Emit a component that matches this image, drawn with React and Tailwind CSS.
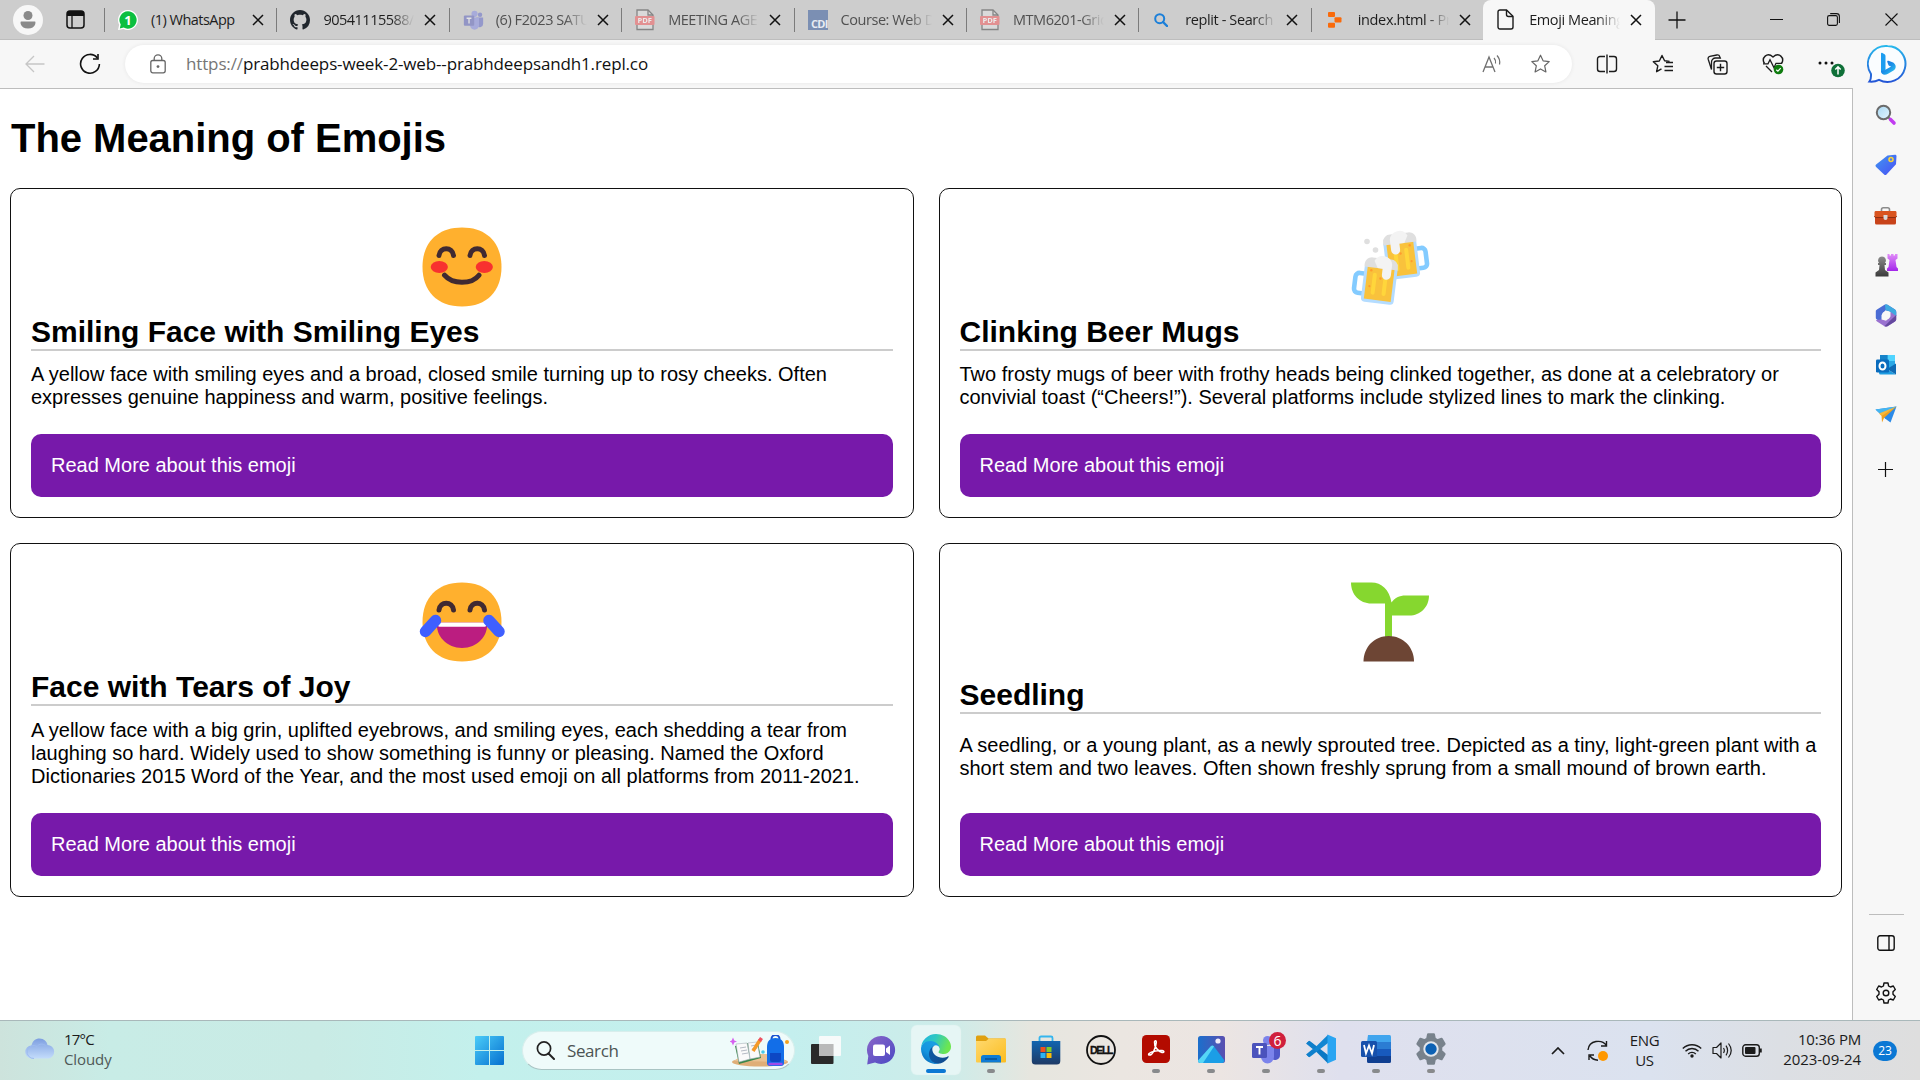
import React from "react";

const UI = "font-['Open_Sans','Noto_Sans',sans-serif]";

function Svg({ w, h, vb, className = "", children }) {
  return (
    <svg width={w} height={h} viewBox={vb || `0 0 ${w} ${h}`} fill="none" className={`block shrink-0 ${className}`}>
      {children}
    </svg>
  );
}

/* ---------- tab icons ---------- */

const PdfIcon = () => (
  <Svg w={20} h={22} className="opacity-60">
    <path d="M2 1h11l5 5v14.5H2z" fill="#e4e4e4" stroke="#555" strokeWidth="1.3" />
    <path d="M13 1v5h5" stroke="#555" strokeWidth="1.3" />
    <rect x="0" y="7" width="19.5" height="9" rx="1" fill="#f0686a" />
    <text x="9.7" y="14.3" fontSize="7.5" fontWeight="700" textAnchor="middle" fill="#fff" fontFamily="Open Sans">PDF</text>
  </Svg>
);

const WhatsAppIcon = () => (
  <Svg w={20} h={20}>
    <path d="M10 0a10 10 0 1 1-4.6 18.9L0 20l1.2-5.2A10 10 0 0 1 10 0z" fill="#fff" />
    <path d="M10 1.3a8.7 8.7 0 1 1-4.3 16.3L1.8 18.4l.9-3.9A8.7 8.7 0 0 1 10 1.3z" fill="#0bbf3f" />
    <text x="10" y="14.8" fontSize="13" fontWeight="700" textAnchor="middle" fill="#fff" fontFamily="Open Sans">1</text>
  </Svg>
);

const GithubIcon = () => (
  <Svg w={20} h={20} vb="0 0 16 16">
    <path fill="#20262d" d="M8 0C3.58 0 0 3.58 0 8c0 3.54 2.29 6.53 5.47 7.59.4.07.55-.17.55-.38 0-.19-.01-.82-.01-1.49-2.01.37-2.53-.49-2.69-.94-.09-.23-.48-.94-.82-1.13-.28-.15-.68-.52-.01-.53.63-.01 1.08.58 1.23.82.72 1.21 1.87.87 2.33.66.07-.52.28-.87.51-1.07-1.78-.2-3.64-.89-3.64-3.95 0-.87.31-1.59.82-2.15-.08-.2-.36-1.02.08-2.12 0 0 .67-.21 2.2.82.64-.18 1.32-.27 2-.27s1.36.09 2 .27c1.53-1.04 2.2-.82 2.2-.82.44 1.1.16 1.92.08 2.12.51.56.82 1.27.82 2.15 0 3.07-1.87 3.75-3.65 3.95.29.25.54.73.54 1.48 0 1.07-.01 1.93-.01 2.2 0 .21.15.46.55.38A8.01 8.01 0 0 0 16 8c0-4.42-3.58-8-8-8z" />
  </Svg>
);

const TeamsShape = () => (
  <g>
    <circle cx="24.5" cy="7" r="3.2" fill="#5059c9" />
    <path d="M19 11h10v9a5 5 0 0 1-9 3z" fill="#5059c9" />
    <circle cx="16.5" cy="5.5" r="4.5" fill="#7b83eb" />
    <path d="M10 11h13v11a6.5 6.5 0 0 1-13 0z" fill="#7b83eb" />
    <rect x="1" y="8" width="15" height="15" rx="1.5" fill="#4b53bc" />
    <path d="M5 12h7M8.5 12v7.5" stroke="#fff" strokeWidth="1.9" />
  </g>
);

const TeamsTab = () => (
  <Svg w={21} h={20} vb="0 0 30 29" className="opacity-45"><TeamsShape /></Svg>
);

const CdiIcon = () => (
  <div className="h-5 w-5 overflow-hidden">
    <Svg w={20} h={20}>
      <rect width="20" height="20" fill="#7b8fb3" />
      <text x="3" y="18" fontSize="11" fontWeight="700" fill="#e8ecf2" fontFamily="Open Sans" letterSpacing="-.7">CDI</text>
    </Svg>
  </div>
);

const BlueSearch = () => (
  <Svg w={14} h={14} className="ml-[2px]">
    <circle cx="5.7" cy="5.7" r="4.5" stroke="#1b7fd9" strokeWidth="2" />
    <path d="m9 9 4 4" stroke="#1b7fd9" strokeWidth="2.4" strokeLinecap="round" />
  </Svg>
);

const ReplitIcon = () => (
  <Svg w={14} h={16} className="ml-[3px]">
    <rect x="0" y="0" width="7" height="5" rx="1" fill="#f96a0b" />
    <rect x="6.5" y="5.3" width="7" height="5.2" rx="1" fill="#f96a0b" />
    <rect x="0" y="10.8" width="7" height="5" rx="1" fill="#f96a0b" />
  </Svg>
);

const PageIcon = () => (
  <Svg w={17} h={21}>
    <path d="M3 1h6.5L16 7.3V18a2 2 0 0 1-2 2H3a2 2 0 0 1-2-2V3a2 2 0 0 1 2-2z" stroke="#1b1b1b" strokeWidth="1.4" />
    <path d="M9.5 1v4.5a2 2 0 0 0 2 2H16" stroke="#1b1b1b" strokeWidth="1.4" />
  </Svg>
);

const Cross = () => (
  <Svg w={12} h={12}>
    <path d="m1 1 10 10M11 1 1 11" stroke="#111" strokeWidth="1.5" />
  </Svg>
);

const fade = "[mask-image:linear-gradient(to_right,#000_75%,transparent)]";

const tabs = [
  { icon: <WhatsAppIcon />, title: "(1) WhatsApp", tone: "text-[#1d1d1d] tracking-[-0.52px]" },
  { icon: <GithubIcon />, title: "90541115588/", tone: `text-[#1d1d1d] tracking-[-0.5px] ${fade}` },
  { icon: <TeamsTab />, title: "(6) F2023 SATU", tone: `text-[#505050] tracking-[-0.45px] ${fade}` },
  { icon: <PdfIcon />, title: "MEETING AGEN", tone: `text-[#505050] tracking-[-0.45px] ${fade}` },
  { icon: <CdiIcon />, title: "Course: Web D", tone: `text-[#505050] tracking-[-0.45px] ${fade}` },
  { icon: <PdfIcon />, title: "MTM6201-Grid", tone: `text-[#505050] tracking-[-0.45px] ${fade}` },
  { icon: <BlueSearch />, title: "replit - Search", tone: `text-[#1d1d1d] tracking-[-0.4px] ${fade}` },
  { icon: <ReplitIcon />, title: "index.html - Pr", tone: `text-[#1d1d1d] tracking-[-0.35px] ${fade}` },
];

function Tab({ icon, title, tone, active }) {
  return (
    <div
      className={
        active
          ? "flex h-10 w-[172px] items-center rounded-t-lg bg-[#f7f7f7] pl-[14px]"
          : "flex h-10 w-[172.4px] items-center"
      }
    >
      {!active && <div className="mr-[13px] h-6 w-px bg-[#7b7b7b]" />}
      <div className={`flex items-center ${active ? "w-8" : "w-[33px]"}`}>{icon}</div>
      <div className={`w-[91px] overflow-hidden whitespace-nowrap text-[14.5px] leading-5 ${tone}`}>{title}</div>
      <div className="ml-[10px]"><Cross /></div>
    </div>
  );
}

function TabStrip() {
  return (
    <div className="flex h-10 items-center border-b border-[#bdbdbd] bg-[#cdcdcd]">
      <div className="ml-[13px] flex size-[30px] items-center justify-center rounded-full bg-[#f7f7f7]">
        <Svg w={16} h={18}>
          <circle cx="8" cy="4.5" r="4.5" fill="#8a8a8a" />
          <path d="M1 10.5h14c1 0 1 7-7 7s-8-7-7-7z" fill="#8a8a8a" />
        </Svg>
      </div>
      <Svg w={19} h={19} className="ml-[22.5px]">
        <rect x="1" y="1" width="17" height="17" rx="3" stroke="#111" strokeWidth="1.5" />
        <path d="M1 6V4a3 3 0 0 1 3-3h11a3 3 0 0 1 3 3v2z" fill="#111" />
        <path d="M6 6v12" stroke="#111" strokeWidth="1.3" />
      </Svg>
      <div className="ml-[19.5px] flex h-10">
        {tabs.map((t, i) => <Tab key={i} {...t} />)}
        <Tab active icon={<PageIcon />} title="Emoji Meaning" tone={`text-[#1d1d1d] tracking-[-0.4px] ${fade}`} />
      </div>
      <Svg w={18} h={18} className="ml-[13px]">
        <path d="M9 0.5v17M.5 9h17" stroke="#111" strokeWidth="1.3" />
      </Svg>
      <div className="ml-auto flex items-center">
        <div className="flex w-14 justify-center"><div className="mr-[2px] h-px w-[13px] bg-[#111]" /></div>
        <div className="flex w-[57px] justify-center">
          <Svg w={13} h={13}>
            <rect x=".6" y="2.6" width="9.8" height="9.8" rx="1.6" stroke="#111" strokeWidth="1.1" />
            <path d="M3.2 .6H9.5A2.9 2.9 0 0 1 12.4 3.5V10" stroke="#111" strokeWidth="1.1" />
          </Svg>
        </div>
        <div className="flex w-[58px] justify-center">
          <Svg w={13} h={13}><path d="m.5.5 12 12M12.5.5l-12 12" stroke="#111" strokeWidth="1.1" /></Svg>
        </div>
      </div>
    </div>
  );
}

/* ---------- address bar ---------- */

const star = "M10 1.2l2.6 5.6 6.1.8-4.5 4.2 1.2 6.1L10 14.9l-5.4 3 1.2-6.1L1.3 7.6l6.1-.8z";

function Toolbar() {
  return (
    <div className="flex h-12 items-center bg-[#f7f7f7]">
      <Svg w={20} h={18} className="ml-[25px]">
        <path d="M19.5 9H1M9 1 1 9l8 8" stroke="#c6c6c6" strokeWidth="1.3" />
      </Svg>
      <Svg w={22} h={22} className="ml-[34px]">
        <path d="M18.3 4.9A9.4 9.4 0 1 0 20.4 11" stroke="#111" strokeWidth="1.6" />
        <path d="M19 1v5h-5" stroke="#111" strokeWidth="1.6" />
      </Svg>
      <div className="ml-6 flex h-[38px] w-[1447px] items-center rounded-full bg-white pl-[25px] shadow-[0_0_4px_rgba(0,0,0,0.07)]">
        <Svg w={16} h={20}>
          <rect x=".8" y="6.5" width="14.4" height="12.3" rx="2" stroke="#666" strokeWidth="1.3" />
          <path d="M4.2 6.5V4.6a3.8 3.8 0 0 1 7.6 0v1.9" stroke="#666" strokeWidth="1.3" />
          <circle cx="8" cy="12.6" r="1.4" fill="#666" />
        </Svg>
        <div className="ml-5 w-[464px] whitespace-nowrap text-[17px] leading-6 tracking-[-0.14px] text-[#111]">
          <span className="text-[#767676]">https://</span>prabhdeeps-week-2-web--prabhdeepsandh1.repl.co
        </div>
        <Svg w={20} h={20} className="ml-[832px]">
          <path d="m1 18 6-15 6 15M3 13h8" stroke="#707070" strokeWidth="1.3" />
          <path d="M12 4a6 6 0 0 1 1.500 5.500M15 1.500a10 10 0 0 1 2.500 9" stroke="#707070" strokeWidth="1.2" />
        </Svg>
        <Svg w={21} h={20} vb="0 0 20 20" className="ml-7"><path d={star} stroke="#666" strokeWidth="1.2" strokeLinejoin="round" /></Svg>
      </div>
      <Svg w={22} h={20} className="ml-6">
        <path d="M9 2.500H4a2.500 2.500 0 0 0-2.500 2.500v10A2.500 2.500 0 0 0 4 17.500h5M13 2.500h5a2.500 2.500 0 0 1 2.500 2.500v10a2.500 2.500 0 0 1-2.500 2.500h-5M11 .5v19" stroke="#1b1b1b" strokeWidth="1.4" />
      </Svg>
      <Svg w={22} h={20} className="ml-[34px]">
        <path d="M9.500 14.800 4.600 17.700l1.200-5.900L1.300 7.800l6-.8L10 1.500l2.600 5.300 5 .6" stroke="#1b1b1b" strokeWidth="1.400" strokeLinejoin="round" />
        <path d="M14 8.500h7M12.500 12.500H21M12.500 16.500H21" stroke="#1b1b1b" strokeWidth="1.500" />
      </Svg>
      <Svg w={21} h={21} className="ml-[33px]">
        <rect x="7" y="7" width="13" height="13" rx="2.500" stroke="#1b1b1b" strokeWidth="1.400" />
        <path d="M13.500 9.800v7.400M9.800 13.500h7.400" stroke="#1b1b1b" strokeWidth="1.400" />
        <path d="M4.500 15.500 1.200 5.200A2.400 2.400 0 0 1 2.800 2.300L9.800 1a2.600 2.600 0 0 1 3 1.800L13.300 4H8.500A4 4 0 0 0 4.500 8z" stroke="#1b1b1b" strokeWidth="1.300" />
      </Svg>
      <Svg w={22} h={22} className="ml-[34px]">
        <path d="M2.500 10.500C-1 5 5-1.500 11 4c6-5.500 12 1 8.500 6.500M4 13l6 6" stroke="#1b1b1b" strokeWidth="1.400" />
        <path d="M1 10.800h5l2-4 4 8 2-4.500h6" stroke="#1b1b1b" strokeWidth="1.300" />
        <circle cx="16.500" cy="16.500" r="4.800" fill="#107c10" />
        <path d="m14.300 16.700 1.600 1.500 2.800-3" stroke="#fff" strokeWidth="1.200" />
      </Svg>
      <Svg w={28} h={24} className="mt-[6px] ml-[34px]">
        <circle cx="2" cy="8" r="1.500" fill="#111" /><circle cx="8" cy="8" r="1.500" fill="#111" /><circle cx="14" cy="8" r="1.500" fill="#111" />
        <circle cx="20" cy="15.500" r="6.800" fill="#0f7038" />
        <path d="M20 19.500v-7.500M17.300 14.500l2.700-2.700 2.700 2.700" stroke="#fff" strokeWidth="1.500" />
      </Svg>
      <Svg w={40} h={40} className="ml-[21px]">
        <defs>
          <linearGradient id="bingRing" x1="0" y1="0" x2="0" y2="1"><stop stopColor="#27b8ec" /><stop offset="1" stopColor="#2455d6" /></linearGradient>
          <linearGradient id="bingB" x1="0" y1="0" x2="1" y2="1"><stop stopColor="#1665dd" /><stop offset=".5" stopColor="#1b8fe8" /><stop offset="1" stopColor="#35d2ee" /></linearGradient>
        </defs>
        <path d="M20.500 2a18 18 0 1 1-8.500 33.900c-3 1.500-6.500 2-9.600 1.700 1.500-2 1.800-4.600 1.600-7.600A18 18 0 0 1 20.500 2z" fill="#fafdff" stroke="url(#bingRing)" strokeWidth="2" />
        <path d="M14 9.500c0-.8.800-1 1.400-.6l2.200 1.400c.6.400.9.900.9 1.600V26L14 28.500z" fill="#1c9df0" />
        <path d="M14 27c0 4 4 4.500 7 2.700l5.500-3.300c4-2.500 2-7-1-8.200l-4-1.500c-1-.3-1.500.5-1.200 1.400l1 2.600c.2.600.6 1 1.200 1.200l1.700.7L18 26z" fill="url(#bingB)" />
      </Svg>
    </div>
  );
}

/* ---------- page emojis ---------- */

const face = "M40 0.500C65 .5 79.500 16 79.500 40S65 79.500 40 79.500.5 64 .5 40 15 .5 40 .5z";

const Smile = () => (
  <Svg w={80} h={80}>
    <path d={face} fill="#ffb02e" />
    <ellipse cx="17.300" cy="40" rx="8.600" ry="6" fill="#f8312f" />
    <ellipse cx="62.300" cy="40" rx="8.600" ry="6" fill="#f8312f" />
    <path d="M17 28.500c1-9 13.500-9 14.500 0M48 28.500c1-9 13.500-9 14.500 0M22.500 48.200c8 9.500 27 9.500 34.500 0" stroke="#402a32" strokeWidth="5" strokeLinecap="round" />
  </Svg>
);

const Joy = () => (
  <Svg w={86} h={80}>
    <path d={face} transform="translate(3 0)" fill="#ffb02e" />
    <path d="M20 28c1-9 13.500-9 14.500 0M51 28c1-9 13.500-9 14.500 0" stroke="#402a32" strokeWidth="5" strokeLinecap="round" />
    <path d="M18 40.500h50C69.500 54 58 66 43 66S16.500 54 18 40.500z" fill="#bb1d80" />
    <path d="M18 40.500h50l-.8 3a1.600 1.600 0 0 1-1.500 1.200H20.500a1.600 1.600 0 0 1-1.500-1.200z" fill="#fff" />
    <path d="M16.500 38.500 6.500 49.500M70 38.500l10 11" stroke="#3f5fff" strokeWidth="11.500" strokeLinecap="round" />
  </Svg>
);

const Mug = () => (
  <g>
    <path d="M2 9h-6a4 4 0 0 0-4 4v12a4 4 0 0 0 4 4h6" stroke="#83cbff" strokeWidth="4.600" />
    <path d="M0 0h33v33a4 4 0 0 1-4 4H4a4 4 0 0 1-4-4z" fill="#b4dcff" />
    <path d="M3 0h27v34H3z" fill="#f9c23c" />
    <path d="M11 9v18M22 9v18" stroke="#ffd63b" strokeWidth="4" strokeLinecap="round" />
    <circle cx="7" cy="5" r="1.300" fill="#ff9b2e" /><circle cx="7" cy="21" r="1.100" fill="#ff9b2e" /><circle cx="17" cy="12" r="1.200" fill="#ff9b2e" />
  </g>
);

const Beers = () => (
  <Svg w={80} h={80}>
    <g transform="translate(66 12.500) rotate(-7) scale(-1 1)">
      <Mug />
      <path d="M0 2a7.500 7.500 0 0 1 7-10h18a7 7 0 0 1 8 7v3z" fill="#dfdfdf" />
      <path d="M8-5a9.500 9.500 0 0 1 18 2v11a4.500 4.500 0 0 1-9 0V2H12z" fill="#f3f3f3" />
    </g>
    <g transform="translate(15 37.500) rotate(7)">
      <Mug />
      <path d="M0 2a7.500 7.500 0 0 1 7-10h18a7 7 0 0 1 8 7v3z" fill="#dfdfdf" />
      <path d="M8-5a9.500 9.500 0 0 1 18 2v11a4.500 4.500 0 0 1-9 0V2H12z" fill="#f3f3f3" transform="translate(1 0)" />
    </g>
    <circle cx="17" cy="14.500" r="2.800" fill="#dfdfdf" /><circle cx="25.500" cy="23" r="2.800" fill="#dfdfdf" />
  </Svg>
);

const Seedling = () => (
  <Svg w={80} h={80}>
    <path d="M1 .5h20.500c10 0 18 7 20 20 3-4.500 8-7 14-7h23.500c0 12-9 20-19.500 20H42V57h-7V21.500H21.500C9.500 21.500 1 12.500 1 .5z" fill="#86d72f" />
    <path d="M13.500 79.500C13.500 65 24.500 54 38.700 54S64 65 64 79.500z" fill="#6d4534" />
  </Svg>
);

function Card({ emoji, title, text, titleGap, textGap }) {
  return (
    <article className="flex flex-col rounded-[10px] border border-[#111] px-5 pb-5 pt-[37.500px]">
      <div className="flex justify-center">{emoji}</div>
      <h2 className={`border-b-2 border-[#ccc] text-[30px] font-bold leading-[35px] ${titleGap}`}>{title}</h2>
      <p className={`text-[20px] leading-[23px] ${textGap}`}>
        {text.map((line) => <span key={line} className="block whitespace-nowrap">{line}</span>)}
      </p>
      <a className="mt-auto block h-[63px] rounded-[10px] bg-[#7719aa] px-5 pt-5 text-[20px] leading-[23px] text-white">
        Read More about this emoji
      </a>
    </article>
  );
}

function Page() {
  return (
    <main className="h-[931px] w-[1852px] bg-white px-[10px] font-['Liberation_Sans',Arial,sans-serif] text-black">
      <h1 className="pl-px pt-[26px] text-[40px] font-bold leading-[46px] tracking-[-0.03px]">The Meaning of Emojis</h1>
      <div className="mt-[27px] grid grid-cols-2 grid-rows-[330px_354px] gap-[25px]">
        <Card
          emoji={<Smile />} title="Smiling Face with Smiling Eyes" titleGap="mt-[7.500px]" textGap="mt-3"
          text={["A yellow face with smiling eyes and a broad, closed smile turning up to rosy cheeks. Often", "expresses genuine happiness and warm, positive feelings."]}
        />
        <Card
          emoji={<Beers />} title="Clinking Beer Mugs" titleGap="mt-[7.500px]" textGap="mt-3"
          text={["Two frosty mugs of beer with frothy heads being clinked together, as done at a celebratory or", "convivial toast (“Cheers!”). Several platforms include stylized lines to mark the clinking."]}
        />
        <Card
          emoji={<Joy />} title="Face with Tears of Joy" titleGap="mt-[7.500px]" textGap="mt-[13px]"
          text={["A yellow face with a big grin, uplifted eyebrows, and smiling eyes, each shedding a tear from", "laughing so hard. Widely used to show something is funny or pleasing. Named the Oxford", "Dictionaries 2015 Word of the Year, and the most used emoji on all platforms from 2011-2021."]}
        />
        <Card
          emoji={<Seedling />} title="Seedling" titleGap="mt-[15.500px]" textGap="mt-5"
          text={["A seedling, or a young plant, as a newly sprouted tree. Depicted as a tiny, light-green plant with a", "short stem and two leaves. Often shown freshly sprung from a small mound of brown earth."]}
        />
      </div>
    </main>
  );
}

/* ---------- sidebar ---------- */

const gearPath = "M9 1h4l.6 3 1.800 1 2.900-1 2 3.500L18 9.800v2.400l2.300 2.300-2 3.500-2.900-1-1.800 1-.6 3H9l-.6-3-1.800-1-2.900 1-2-3.500L4 12.200V9.800L1.700 7.500l2-3.500 2.900 1 1.800-1z";
const Gear = () => (
  <g stroke="#111" strokeWidth="1.400" strokeLinejoin="round"><path d={gearPath} /><circle cx="11" cy="11" r="2.800" /></g>
);

function Sidebar() {
  const cell = "flex h-[50px] items-center justify-center";
  return (
    <aside className="flex h-[932px] w-[68px] flex-col border-l border-[#bdbdbd] bg-[#f7f7f7] pr-[2px] pt-[2px]">
      <div className="flex h-[50px] items-center justify-center">
        <Svg w={22} h={22}>
          <defs><linearGradient id="lens" x1="0" y1="0" x2="1" y2="1"><stop stopColor="#a8d8f4" /><stop offset="1" stopColor="#e4f5fd" /></linearGradient></defs>
          <path d="m12.500 12.500 3 3" stroke="#777" strokeWidth="2" />
          <circle cx="8.500" cy="8.500" r="6.700" fill="url(#lens)" stroke="#6b6b6b" strokeWidth="2" />
          <path d="m15.500 15.500 3.500 3.500" stroke="#c13cf0" strokeWidth="3.600" strokeLinecap="round" />
        </Svg>
      </div>
      <div className={cell}>
        <Svg w={22} h={22}>
          <defs><linearGradient id="tag" x1="0" y1="0" x2="1" y2="1"><stop stopColor="#3f97f0" /><stop offset="1" stopColor="#4a4ef5" /></linearGradient></defs>
          <path d="M12.500 1.500 20 .8c1 0 1.500.5 1.500 1.500l-.5 8L11.500 20.500c-.8.8-1.600.8-2.400 0l-8-7.500c-.8-.8-.8-1.600 0-2.400z" fill="url(#tag)" />
          <circle cx="16" cy="5.500" r="2" fill="#4f7be8" stroke="#f8d338" strokeWidth="1.600" />
        </Svg>
      </div>
      <div className={cell}>
        <Svg w={23} h={19}>
          <path d="M7.500 6V3.500A1.800 1.800 0 0 1 9.300 1.700h4.400a1.800 1.800 0 0 1 1.800 1.800V6" stroke="#8b8b8b" strokeWidth="1.600" />
          <rect x="1" y="9" width="21" height="9.500" rx="1.500" fill="#c8431a" />
          <path d="M2 5h19c1 0 1.500.5 1.500 1.500V10c0 1-.5 1.500-1.500 1.500H2C1 11.500.5 11 .5 10V6.500C.5 5.500 1 5 2 5z" fill="#d9541f" />
          <path d="M.5 10c0 1 .5 1.500 1.500 1.500h19c1 0 1.500-.5 1.500-1.500" stroke="#8e2f12" />
          <path d="M9.500 9h4v3a2 2 0 0 1-4 0z" fill="#d8d8d8" />
        </Svg>
      </div>
      <div className={cell}>
        <Svg w={24} h={24}>
          <defs><linearGradient id="rook" x1="0" y1="0" x2="0" y2="1"><stop stopColor="#e08bf8" /><stop offset="1" stopColor="#a326ea" /></linearGradient><linearGradient id="pawn" x1="0" y1="0" x2="0" y2="1"><stop stopColor="#8b8b8b" /><stop offset="1" stopColor="#3b3b3b" /></linearGradient></defs>
          <path d="M13.500 1h2v1.500h1.500V1h2.500v1.500H21V1h2.500v4.500L21.500 7l1 7 1.500 1.500V18H13v-2.500L14.500 14l1-7-2-1.500z" fill="url(#rook)" />
          <path d="M8 3.500a4 4 0 0 1 3 6.600h1v2h-1.500l.5 5 3.500 2.500V23.500h-13V19.600L5 17.100l.5-5H4v-2h1A4 4 0 0 1 8 3.500z" fill="url(#pawn)" />
        </Svg>
      </div>
      <div className={cell}>
        <Svg w={22} h={23}>
          <path d="M9.500.8c1-.5 2-.5 3 0L20 5.500c.8.500 1.200 1.200 1.200 2V12l-6-4.500-4.700-1.300L6.500 11v7L1.800 15.500C1.200 15 .8 14.500.8 13.500v-6c0-1 .4-1.500 1.200-2z" fill="#4a6cd4" />
          <path d="M21.200 8v7.500c0 .8-.4 1.400-1.200 1.900l-7.500 4.800c-1 .5-2 .5-3 0L2 17.400c-.5-.3-.9-.8-1-1.400l5.500-.5 4.500 1.300 4.500-4.300v-5z" fill="#9a72d0" />
          <path d="M10 .7c1-.4 1.700-.4 2.500.1L20 5.500c.8.500 1.200 1.200 1.200 2V12L15 7.500 10.500 6z" fill="#3eaae0" />
          <path d="M21.200 11v4.500c0 .8-.4 1.400-1.200 1.900l-7.500 4.800c-1 .5-2 .5-3 0l5.500-5.500z" fill="#65499f" />
          <circle cx="11" cy="11.500" r="4" fill="#f7f7f7" />
        </Svg>
      </div>
      <div className={cell}>
        <Svg w={22} h={22}>
          <rect x="5" y="1" width="15" height="13" fill="#2aa8e6" /><rect x="12.500" y="1" width="7.500" height="6" fill="#50d4ff" /><rect x="5" y="1" width="7.500" height="5" fill="#1583c9" />
          <path d="M4 10l17 10.500H5.500A1.500 1.500 0 0 1 4 19z" fill="#1e9de2" /><path d="M21 9.500v11l-9-5.500z" fill="#0f6ab4" />
          <rect x="1" y="5.500" width="13" height="13" rx="1.300" fill="#0a6cbd" />
          <ellipse cx="7.500" cy="12" rx="3" ry="3.500" stroke="#fff" strokeWidth="2" />
        </Svg>
      </div>
      <div className={cell}>
        <Svg w={22} h={18}>
          <path d="M.5 3.500 21.500.5 15.500 16.500 10 12.500z" fill="#2b8ae8" />
          <path d="M.5 3.500 21.500.5 6.500 9z" fill="#45b5f0" />
          <path d="M6.500 9 21.500.5 9 12l-2 4.500z" fill="#f0a01e" />
          <path d="m4 7.500 17.500-7L6.500 10z" fill="#f8b83a" />
        </Svg>
      </div>
      <div className="flex h-[58px] items-center justify-center">
        <Svg w={15} h={15}><path d="M7.500 0v15M0 7.500h15" stroke="#111" strokeWidth="1.200" /></Svg>
      </div>
      <div className="ml-4 mr-[14px] mt-auto h-px bg-[#bdbdbd]" />
      <div className="flex h-14 items-center justify-center">
        <Svg w={18} h={16}>
          <rect x=".8" y=".8" width="16.400" height="14.400" rx="2.200" stroke="#111" strokeWidth="1.400" /><path d="M12 1v14" stroke="#111" strokeWidth="1.400" />
        </Svg>
      </div>
      <div className="mb-[6px] flex h-[43px] items-center justify-center">
        <Svg w={22} h={22}><Gear /></Svg>
      </div>
    </aside>
  );
}

/* ---------- taskbar ---------- */

const apps = [
  {
    name: "taskview",
    icon: (
      <Svg w={30} h={30}>
        <rect x="0" y="9" width="22.500" height="20" rx="1" fill="#2a2a2a" />
        <rect x="8" y="1" width="22" height="20" rx="1" fill="#fbfbfb" opacity=".92" />
        <rect x="8" y="9" width="14.500" height="12" fill="#b9b9b9" />
      </Svg>
    ),
  },
  {
    name: "chat",
    icon: (
      <Svg w={30} h={30}>
        <defs><linearGradient id="chat" x1="0" y1="0" x2="1" y2="1"><stop stopColor="#8a66c8" /><stop offset="1" stopColor="#4b49c4" /></linearGradient></defs>
        <path d="M15 1a14 14 0 1 1-6 26.600L1.200 29.500 2.300 21A14 14 0 0 1 15 1z" fill="url(#chat)" />
        <rect x="7" y="9.500" width="12" height="11.500" rx="2" fill="#fff" /><path d="m20 13.500 4-3v9.500l-4-3z" fill="#fff" />
      </Svg>
    ),
  },
  {
    name: "edge", active: true,
    icon: (
      <Svg w={30} h={30} vb="0 0 256 256">
        <defs>
          <linearGradient id="e1" x1="0" y1=".7" x2="1" y2=".7"><stop stopColor="#0c59a4" /><stop offset="1" stopColor="#114a8b" /></linearGradient>
          <linearGradient id="e2" x1=".7" y1=".2" x2=".2" y2="1"><stop stopColor="#1b9de2" /><stop offset=".5" stopColor="#1595df" /><stop offset="1" stopColor="#0667b7" /></linearGradient>
          <linearGradient id="e3" x1="0" y1="0" x2="1" y2=".3"><stop stopColor="#1fb2e6" /><stop offset=".5" stopColor="#2fc8c0" /><stop offset="1" stopColor="#6ce650" /></linearGradient>
        </defs>
        <path d="M231 190.500a93.700 93.700 0 0 1-10.500 4.700 101.900 101.900 0 0 1-35.900 6.500c-47.300 0-88.500-32.600-88.500-74.300a31.500 31.500 0 0 1 16.400-27.300c-42.800 1.800-53.800 46.400-53.800 72.500 0 73.900 68.100 81.400 82.800 81.400 7.900 0 19.800-2.300 27-4.600l1.300-.4a128 128 0 0 0 66.600-52.800 4 4 0 0 0-5.400-5.700z" fill="url(#e1)" />
        <path d="M105.700 241.400a79.200 79.200 0 0 1-22.700-21.300 80.700 80.700 0 0 1 29.500-120c3.200-1.500 8.500-4.100 15.600-4a32.400 32.400 0 0 1 25.700 13 31.900 31.900 0 0 1 6.300 18.700c0-.2 24.500-79.600-80-79.600-43.900 0-80 41.700-80 78.200a130.200 130.200 0 0 0 12.100 56 128 128 0 0 0 156.400 67 75.500 75.500 0 0 1-62.800-8z" fill="url(#e2)" />
        <path d="M152.300 148.900c-.8 1-3.300 2.500-3.300 5.700 0 2.600 1.700 5.200 4.800 7.300 14.300 10 41.400 8.600 41.500 8.600a59.600 59.600 0 0 0 30.300-8.300A61.400 61.400 0 0 0 256 109.200c.3-22.400-8-37.300-11.300-43.900C223.500 23.900 177.700 0 128 0A128 128 0 0 0 0 126.200c.5-36.500 36.800-66 80-66 3.500 0 23.500.3 42 10a72.600 72.600 0 0 1 30.900 29.300c6.100 10.600 7.200 24.100 7.200 29.500s-2.700 13.300-7.800 19.900z" fill="url(#e3)" />
      </Svg>
    ),
  },
  {
    name: "explorer", open: true,
    icon: (
      <Svg w={30} h={28}>
        <defs><linearGradient id="fold" x1="0" y1="0" x2="1" y2="1"><stop stopColor="#ffd970" /><stop offset="1" stopColor="#fbbd20" /></linearGradient></defs>
        <path d="M0 2a1.500 1.500 0 0 1 1.500-1.500H9L12.500 3.500H29V8H0z" fill="#e0a010" />
        <path d="M0 6h10l3-2.500h17V26.500a1 1 0 0 1-1 1H1a1 1 0 0 1-1-1z" fill="url(#fold)" />
        <path d="M5 27.500v-5A2.500 2.500 0 0 1 7.500 20h15a2.500 2.500 0 0 1 2.500 2.500v5z" fill="#0f7bd4" /><path d="M9 24h12" stroke="#0a4f94" strokeWidth="1.500" />
      </Svg>
    ),
  },
  {
    name: "store",
    icon: (
      <Svg w={30} h={30}>
        <defs><linearGradient id="store" x1="0" y1="0" x2="0" y2="1"><stop stopColor="#1265b0" /><stop offset="1" stopColor="#1e3a66" /></linearGradient></defs>
        <path d="M8.500 7V3A1.500 1.500 0 0 1 10 1.500h10A1.500 1.500 0 0 1 21.500 3v4" stroke="#35b5ee" strokeWidth="1.800" />
        <path d="M.8 6h28.500v20a3.500 3.500 0 0 1-3.500 3.500H4.300A3.500 3.500 0 0 1 .8 26z" fill="url(#store)" />
        <path d="M9.500 12h5v5h-5z" fill="#f1511b" /><path d="M15.500 12h5v5h-5z" fill="#80cc28" /><path d="M9.500 18h5v5h-5z" fill="#2ab3f2" /><path d="M15.500 18h5v5h-5z" fill="#fbbc09" />
      </Svg>
    ),
  },
  {
    name: "dell",
    icon: (
      <Svg w={30} h={30}>
        <circle cx="15" cy="15" r="14" stroke="#111" strokeWidth="1.800" />
        <text x="15" y="18.800" fontSize="10.500" fontWeight="700" textAnchor="middle" fill="#111" stroke="#111" strokeWidth=".3" fontFamily="Liberation Sans" letterSpacing="-1.300">DELL</text>
      </Svg>
    ),
  },
  {
    name: "acrobat", open: true,
    icon: (
      <Svg w={28} h={28}>
        <rect width="28" height="28" rx="4.500" fill="#b30b00" />
        <path d="M7 20c-2-1 4-5 13-4.500 3 .5 2 2.500 0 2-4-1-8-6-7.500-10.500.3-2 2-1.500 1.800.5C14 12 10.500 21 7 20z" stroke="#fff" strokeWidth="1.500" />
      </Svg>
    ),
  },
  {
    name: "photos", open: true,
    icon: (
      <Svg w={27} h={27}>
        <defs><linearGradient id="ph" x1="0" y1="0" x2="1" y2="0"><stop stopColor="#1b6fcc" /><stop offset="1" stopColor="#5a4fb0" /></linearGradient></defs>
        <rect width="27" height="27" rx="2.500" fill="url(#ph)" />
        <path d="M1 25 13 10.500a2 2 0 0 1 3 0L26.500 24.500A3 3 0 0 1 24.500 27h-22A2 2 0 0 1 1 25z" fill="#1b9ee6" /><path d="M0 24.500 13 10c1-.8 2-.8 3 .5L5 27H2.500A2.500 2.500 0 0 1 0 24.500z" fill="#55d6f6" />
        <circle cx="20" cy="5" r="2.600" fill="#f0ecfa" />
      </Svg>
    ),
  },
  { name: "teams", open: true, badge: "6", icon: <Svg w={30} h={29}><TeamsShape /></Svg> },
  {
    name: "vscode", open: true,
    icon: (
      <Svg w={30} h={30}>
        <path d="M1 8.500 3.500 6.800 22 21v8.500z" fill="#0a78c4" /><path d="M1 21.500 3.500 23.300 22 9V.8z" fill="#1286d2" />
        <path d="M21.500.5 30 4.300v21.500l-8.500 3.700z" fill="#2aa5f2" />
        <path d="M0 9.500 3 7l7 5.500-3 2.700zM0 20.500 3 23l7-5.500-3-2.700z" fill="#0f7fcb" />
      </Svg>
    ),
  },
  {
    name: "word", open: true,
    icon: (
      <Svg w={30} h={28}>
        <path d="M7 0h21.500A1.500 1.500 0 0 1 30 1.500V7H6z" fill="#41a5ee" /><path d="M6 7h24v7H6z" fill="#2b7cd3" /><path d="M6 14h24v7H6z" fill="#185abd" /><path d="M6 21h24v5.500a1.500 1.500 0 0 1-1.500 1.500H7.500A1.500 1.500 0 0 1 6 26.500z" fill="#103f91" />
        <rect x="0" y="6" width="16" height="16" rx="1.500" fill="#1650ac" />
        <path d="m3 10 2 8.500 3-8 3 8 2-8.500" stroke="#fff" strokeWidth="1.800" />
      </Svg>
    ),
  },
  {
    name: "settings", open: true,
    icon: (
      <Svg w={32} h={32} vb="0 0 22 22">
        <path d={gearPath} fill="#78828c" stroke="#78828c" strokeWidth="1.500" strokeLinejoin="round" />
        <circle cx="11" cy="11" r="5.300" fill="#e2e6ec" /><circle cx="11" cy="11" r="3.900" fill="#0c61b4" />
      </Svg>
    ),
  },
];

function TaskbarApp({ icon, active, open, badge }) {
  return (
    <div className="flex w-[55px] justify-center">
      <div className={`relative flex h-12 w-12 flex-col items-center rounded-[5px] pb-px ${active ? "bg-[#e6f6f5] shadow-[0_0_1px_1px_rgba(255,255,255,0.5)]" : ""}`}>
        <div className="flex h-[47px] items-center">{icon}</div>
        {badge && (
          <span className="absolute left-[27px] top-[6px] flex size-[17px] items-center justify-center rounded-full bg-[#d0203c] text-[14px] leading-none text-white">{badge}</span>
        )}
        {active && <div className="-mt-[3px] h-1 w-5 shrink-0 rounded-full bg-[#0b78d4]" />}
        {open && <div className="-mt-[3px] h-1 w-2 shrink-0 rounded-full bg-[#888a8c]" />}
      </div>
    </div>
  );
}

function Taskbar() {
  return (
    <footer className="flex h-[60px] items-center border-t border-[#a9b8ba] bg-[linear-gradient(90deg,#cde3dc_0px,#c8ece6_110px,#c9ebe5_320px,#c3f0ec_480px,#c4efee_790px,#cdece9_950px,#e6e6df_1030px,#ebe6e1_1120px,#ece5e2_1220px,#dfe0ee_1340px,#dbe2ef_1650px,#dcdfe4_1780px,#dedede_1920px)] text-[#1b1b1b]">
      <div className="flex w-[475px] items-center pb-1 pl-[25px]">
        <Svg w={31} h={21}>
          <defs><linearGradient id="cl" x1="0" y1="0" x2="0" y2="1"><stop stopColor="#7d9ee0" /><stop offset="1" stopColor="#c3dcfb" /></linearGradient></defs>
          <path d="M7 20.500a6.500 6.500 0 0 1-.5-13C7.500 3 10.500.5 14.500.5c4.500 0 7.500 3 8 6.500a6.800 6.800 0 0 1 1 13.500z" fill="url(#cl)" />
          <path d="M9 20.500a6.500 6.500 0 1 1 3-12c2-3 6-3 8.500-1" stroke="#9dbbf0" />
        </Svg>
        <div className="ml-2 mt-px text-[15px] leading-5">
          <div className="tracking-[-0.8px]">17°C</div>
          <div className="tracking-[-0.1px] text-[#4f5957]">Cloudy</div>
        </div>
      </div>
      <Svg w={29} h={29}>
        <defs><linearGradient id="win" x1="0" y1="0" x2="1" y2="1"><stop stopColor="#4accf8" /><stop offset="1" stopColor="#0670d0" /></linearGradient></defs>
        <path d="M1 0h13v14H0V1a1 1 0 0 1 1-1zM15 0h13a1 1 0 0 1 1 1v13H15zM0 15h14v14H1a1 1 0 0 1-1-1zM15 15h14v13a1 1 0 0 1-1 1H15z" fill="url(#win)" />
      </Svg>
      <div className="ml-[18px] flex h-[39px] w-[273px] items-center rounded-full border border-x-[#d8eeec] border-b-[#a9c4c3] border-t-[#d8eeec] bg-[#effbfa] pl-[13px]">
        <Svg w={19} h={19}><circle cx="8" cy="7.500" r="6.600" stroke="#222" strokeWidth="1.700" /><path d="m12.500 12.500 5.500 5.500" stroke="#222" strokeWidth="2" strokeLinecap="round" /></Svg>
        <div className="ml-3 w-[163px] text-[17px] tracking-[-0.400px] text-[#4c5453]">Search</div>
        <Svg w={60} h={32}>
          <ellipse cx="30" cy="27" rx="28" ry="4.500" fill="#dfae78" /><path d="M4 26 14 19h34l9 8z" fill="#e9c193" />
          <path d="m5 11 13-3 10 0 3 15-22 6z" fill="#398749" /><path d="m6 9 11-1 3 16-11 3zM18 8l9-1 3 15-10 2z" fill="#fafafa" stroke="#a9b4bc" strokeWidth=".6" />
          <path d="m10 13 6-1m-5 4 6-1m-5 4 6-1m3-7 5-1m-4 4 5-1" stroke="#a3aab6" strokeWidth=".8" />
          <path d="m23 16 7-11" stroke="#f59a28" strokeWidth="3.500" /><path d="m29.500 6 2-3" stroke="#ee5060" strokeWidth="3.500" />
          <path d="M3 2.500l1.300 3 2.700 1-2.700 1L3 10.500l-1.300-3L-1 6.500l2.700-1z" fill="#d661ef" />
          <path d="M41.500 4a4 4 0 0 1 8 0" stroke="#1a4fd0" strokeWidth="2" />
          <path d="M37 12c0-6 3-9 8.500-9S54 6 54 12v16a3 3 0 0 1-3 3H40a3 3 0 0 1-3-3z" fill="#126ee8" /><path d="M40 18h11v7a2 2 0 0 1-2 2h-7a2 2 0 0 1-2-2z" fill="#0d47c4" /><path d="M38.500 29h14" stroke="#a04be8" strokeWidth="2.500" />
          <circle cx="57" cy="7" r="2" fill="#f2a321" /><circle cx="33" cy="17" r="1.800" fill="#46c8e8" />
        </Svg>
      </div>
      <div className="ml-[3.500px] flex pb-px">{apps.map((a) => <TaskbarApp key={a.name} {...a} />)}</div>
      <Svg w={14} h={8} className="ml-[92px]"><path d="m1 7 6-6 6 6" stroke="#1b1b1b" strokeWidth="1.700" /></Svg>
      <Svg w={22} h={22} className="ml-[22px]">
        <path d="M1 10C2 0 15-1 19.500 5.500M19.500 1v5h-5.500M2 20v-5h5M3 16c2 3 5 4 8 4.300" stroke="#1b1b1b" strokeWidth="1.400" />
        <circle cx="16" cy="16" r="5" fill="#ff9800" />
      </Svg>
      <div className="ml-[17px] w-[38px] whitespace-nowrap pb-[2px] text-center text-[15px] leading-5 tracking-[-0.400px]">ENG<br />US</div>
      <Svg w={20} h={15} className="ml-[18px]">
        <path d="M.8 5.500a13 13 0 0 1 18.400 0M3.500 8.300a9 9 0 0 1 13 0M6.200 11a5.300 5.300 0 0 1 7.600 0" stroke="#1b1b1b" strokeWidth="1.400" /><circle cx="10" cy="13" r="1.700" fill="#1b1b1b" />
      </Svg>
      <Svg w={21} h={17} className="ml-[10px]">
        <path d="M1 5.500h3.500L9 1v15L4.500 11.500H1z" stroke="#1b1b1b" strokeWidth="1.200" strokeLinejoin="round" />
        <path d="M11.500 6c1 1.500 1 3.500 0 5M14 3.700c2 3 2 6.600 0 9.600M16.500 1.500c3.500 4.500 3.500 9.500 0 14" stroke="#1b1b1b" strokeWidth="1.200" />
      </Svg>
      <Svg w={20} h={13} className="ml-[9px]">
        <rect x=".8" y=".8" width="16.500" height="11.400" rx="2.800" stroke="#1b1b1b" strokeWidth="1.400" /><rect x="3" y="3" width="10.500" height="7" rx="1" fill="#1b1b1b" /><path d="M18.500 4.500v4" stroke="#1b1b1b" strokeWidth="2.500" />
      </Svg>
      <div className="ml-auto mr-3 w-[90px] pb-[3px] text-right text-[15px] leading-5">
        <div className="whitespace-nowrap tracking-[-0.200px]">10:36 PM</div>
        <div className="-ml-5 whitespace-nowrap tracking-[-0.050px]">2023-09-24</div>
      </div>
      <div className="mr-[23px] flex h-5 w-6 items-center justify-center rounded-full bg-[#0b78d4] text-[12px] leading-none text-white">23</div>
    </footer>
  );
}

export default function App() {
  return (
    <div className={`h-[1080px] w-[1920px] overflow-hidden bg-white ${UI}`}>
      <TabStrip />
      <Toolbar />
      <div className="flex h-[932px]">
        <div className="w-[1852px] border-t border-[#bdbdbd]"><Page /></div>
        <Sidebar />
      </div>
      <Taskbar />
    </div>
  );
}
